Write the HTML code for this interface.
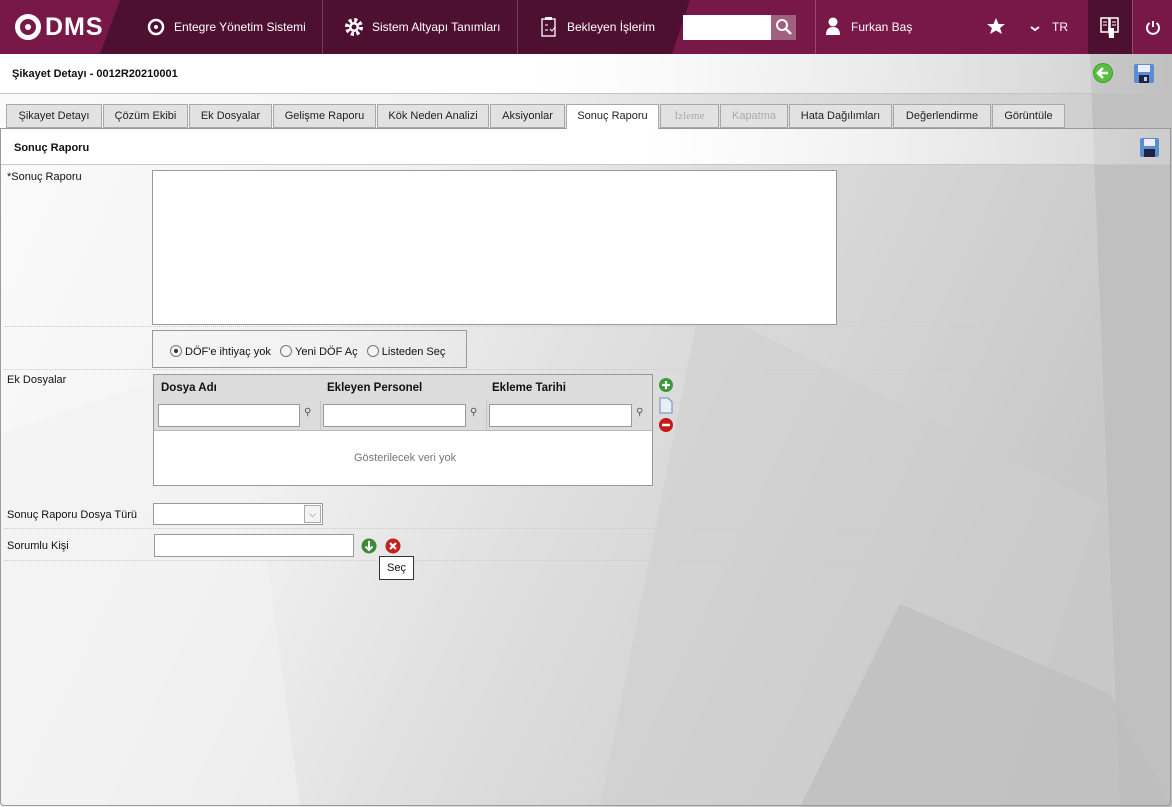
<!DOCTYPE html>
<html><head><meta charset="utf-8"><style>
*{margin:0;padding:0;box-sizing:border-box}
body{width:1172px;height:807px;overflow:hidden;font-family:"Liberation Sans",sans-serif;font-size:11px;color:#111;position:relative;background:#ddd}
.a{position:absolute}
.hdr{left:0;top:0;width:1172px;height:54px;background:#781848}
.nav{color:#fff;font-size:12px;top:0;height:54px;line-height:54px}
.tab{position:absolute;top:104px;height:24px;border:1px solid #a8a8a8;background:#e2e2e2;font-size:11px;line-height:22px;text-align:center;color:#222}
.tab.dis{color:#aaa}
.tab.act{background:#fff;height:25px;border-bottom:none}
.lbl{font-size:11px;color:#111}
.dot{height:0;border-top:1px dotted #ccc}
.inp{background:#fff;border:1px solid #999}
.rad{display:inline-block;width:12px;height:12px;border:1px solid #777;border-radius:50%;background:#f4f4f4;vertical-align:-2px;margin-right:3px;position:relative}
</style></head><body>
<svg class="a" style="left:0;top:54px" width="1172" height="753">
<defs><linearGradient id="g" x1="0" y1="0" x2="1" y2="0.3"><stop offset="0" stop-color="#fbfbfb"/><stop offset="0.35" stop-color="#f2f2f2"/><stop offset="0.6" stop-color="#dedede"/><stop offset="1" stop-color="#c8c8c8"/></linearGradient></defs>
<rect width="1172" height="753" fill="url(#g)"/>
<polygon points="0,380 240,300 300,753 0,753" fill="#f1f1f1" opacity=".6"/>
<polygon points="700,250 1100,450 1000,753 600,753" fill="#cdcdcd" opacity=".5"/>
<polygon points="1090,0 1172,0 1172,753 1120,753" fill="#c0c0c0"/>
<polygon points="900,550 1110,640 1172,753 800,753" fill="#bdbdbd" opacity=".7"/>
</svg>
<div class="a hdr"></div>
<svg class="a" style="left:0;top:0" width="1172" height="54">
<polygon points="120,0 690,0 672,54 100,54" fill="#4e1030"/>
<polygon points="1088,0 1132,0 1132,54 1088,54" fill="#4e1030"/>
<line x1="322.5" y1="0" x2="322.5" y2="54" stroke="#7a3a58"/>
<line x1="517.5" y1="0" x2="517.5" y2="54" stroke="#7a3a58"/>
<line x1="815.5" y1="0" x2="815.5" y2="54" stroke="#9a4a70"/>
<line x1="1132.5" y1="0" x2="1132.5" y2="54" stroke="#9a4a70"/>
<circle cx="28" cy="27" r="10.5" fill="none" stroke="#fff" stroke-width="5"/>
<circle cx="28" cy="27" r="3" fill="#fff"/>
<circle cx="156" cy="27" r="7" fill="none" stroke="#fff" stroke-width="2.5"/>
<circle cx="156" cy="27" r="2" fill="#fff"/>
<circle cx="354" cy="27" r="7" fill="none" stroke="#fff" stroke-width="4" stroke-dasharray="3 2.5"/>
<circle cx="354" cy="27" r="5" fill="#fff"/><circle cx="354" cy="27" r="2.5" fill="#4e1030"/>
<rect x="542" y="19" width="13" height="17" fill="none" stroke="#fff" stroke-width="1.3"/>
<path d="M545 17h7v3h-7z" fill="#fff"/><path d="M545 25h3M545 30h3M550 29l2 2 3-4" stroke="#fff" fill="none"/>
<rect x="683" y="15" width="88" height="25" fill="#fff"/>
<rect x="771" y="15" width="25" height="25" fill="#a06080"/>
<circle cx="782" cy="25" r="5" fill="none" stroke="#fff" stroke-width="2"/><path d="M786 29l5 5" stroke="#fff" stroke-width="2.5"/>
<circle cx="833" cy="22" r="4.5" fill="#fff"/><path d="M826 35q0-8 7-8t7 8z" fill="#fff"/>
<polygon points="996,18 998.5,24 1005,24 1000,28 1002,34 996,30.5 990,34 992,28 987,24 993.5,24" fill="#fff"/>
<path d="M1031 27l4 3 4-3" stroke="#fff" stroke-width="2" fill="none"/>
<path d="M1101 18h8v14h-8zM1110 18h8v14h-8z" fill="none" stroke="#fff" stroke-width="1.5"/>
<path d="M1103 22h4M1103 25h4M1112 22h4M1112 25h4" stroke="#fff"/>
<path d="M1108 28h6v10h-5z" fill="#fff"/>
<path d="M1153 21v6" stroke="#fff" stroke-width="2"/><path d="M1149.5 23a6 6 0 1 0 7 0" stroke="#fff" stroke-width="2" fill="none"/>
</svg>
<div class="a nav" style="left:45px;font-size:25px;font-weight:bold;letter-spacing:1px">DMS</div>
<div class="a nav" style="left:174px">Entegre Yönetim Sistemi</div>
<div class="a nav" style="left:372px">Sistem Altyapı Tanımları</div>
<div class="a nav" style="left:567px">Bekleyen İşlerim</div>
<div class="a nav" style="left:851px">Furkan Baş</div>
<div class="a nav" style="left:1052px">TR</div>

<div class="a" style="left:0;top:54px;width:1172px;height:40px;background:linear-gradient(90deg,#fff 0,#fff 45%,rgba(255,255,255,0) 100%);border-bottom:1px solid #c4c4c4"></div>
<div class="a" style="left:12px;top:68px;font-size:11px;font-weight:bold">Şikayet Detayı - 0012R20210001</div>
<svg class="a" style="left:1092px;top:62px" width="70" height="24">
<circle cx="11" cy="11" r="10" fill="#3aa028"/><circle cx="11" cy="11" r="9" fill="#58c040"/>
<path d="M16 11h-9M11 6l-5 5 5 5" stroke="#fff" stroke-width="2.5" fill="none"/>
<rect x="42" y="2" width="20" height="19" rx="2" fill="#5a8ed0"/><rect x="46" y="3" width="12" height="7" fill="#eef"/><rect x="47" y="13" width="10" height="8" fill="#224"/><rect x="52" y="15" width="3" height="4" fill="#ccd"/>
</svg>
<div class="a" style="left:0;top:128px;width:1171px;height:678px;border:1px solid #9a9a9a;border-radius:0 0 4px 4px"></div>
<div class="tab" style="left:6px;width:96px">Şikayet Detayı</div>
<div class="tab" style="left:103px;width:85px">Çözüm Ekibi</div>
<div class="tab" style="left:189px;width:83px">Ek Dosyalar</div>
<div class="tab" style="left:273px;width:103px">Gelişme Raporu</div>
<div class="tab" style="left:377px;width:112px">Kök Neden Analizi</div>
<div class="tab" style="left:490px;width:75px">Aksiyonlar</div>
<div class="tab act" style="left:566px;width:93px">Sonuç Raporu</div>
<div class="tab dis" style="left:660px;width:59px;font-family:'Liberation Serif',serif">İzleme</div>
<div class="tab dis" style="left:720px;width:68px">Kapatma</div>
<div class="tab" style="left:789px;width:103px">Hata Dağılımları</div>
<div class="tab" style="left:893px;width:98px">Değerlendirme</div>
<div class="tab" style="left:992px;width:73px">Görüntüle</div>
<div class="a" style="left:1px;top:129px;width:1169px;height:36px;background:linear-gradient(90deg,#fff 0,#fff 55%,rgba(255,255,255,.2) 100%);border-bottom:1px solid #c8c8c8"></div>
<div class="a" style="left:14px;top:142px;font-weight:bold;font-size:11px">Sonuç Raporu</div>
<svg class="a" style="left:1140px;top:138px" width="20" height="20"><rect x="0" y="0" width="19" height="19" rx="2" fill="#5a8ed0"/><rect x="4" y="1" width="11" height="7" fill="#eef"/><rect x="4" y="11" width="11" height="8" fill="#224"/></svg>
<div class="a lbl" style="left:7px;top:171px">*Sonuç Raporu</div>
<div class="a inp" style="left:152px;top:170px;width:685px;height:155px"></div>
<div class="a dot" style="left:4px;top:326px;width:1096px"></div>
<div class="a" style="left:152px;top:330px;width:315px;height:38px;border:1px solid #999"></div>
<div class="a lbl" style="left:170px;top:345px"><span class="rad"><span style="position:absolute;left:3px;top:3px;width:4px;height:4px;border-radius:50%;background:#333"></span></span>DÖF'e ihtiyaç yok&nbsp;&nbsp;&nbsp;<span class="rad"></span>Yeni DÖF Aç&nbsp;&nbsp;&nbsp;<span class="rad"></span>Listeden Seç</div>
<div class="a dot" style="left:4px;top:369px;width:1104px"></div>
<div class="a lbl" style="left:7px;top:374px">Ek Dosyalar</div>
<div class="a" style="left:153px;top:374px;width:500px;height:112px;border:1px solid #999;background:#fff"></div>
<div class="a" style="left:154px;top:375px;width:498px;height:56px;background:#dcdcdc;border-bottom:1px solid #bbb"></div>
<div class="a" style="left:161px;top:382px;font-weight:bold;font-size:11.5px">Dosya Adı</div>
<div class="a" style="left:327px;top:382px;font-weight:bold;font-size:11.5px">Ekleyen Personel</div>
<div class="a" style="left:492px;top:382px;font-weight:bold;font-size:11.5px">Ekleme Tarihi</div>
<div class="a" style="left:320px;top:401px;width:1px;height:30px;background:#c4c4c4"></div>
<div class="a" style="left:486px;top:401px;width:1px;height:30px;background:#c4c4c4"></div>
<div class="a inp" style="left:158px;top:404px;width:142px;height:23px"></div>
<div class="a inp" style="left:323px;top:404px;width:143px;height:23px"></div>
<div class="a inp" style="left:489px;top:404px;width:143px;height:23px"></div>
<div class="a" style="left:304px;top:407px;font-size:10px;color:#555">⚲</div>
<div class="a" style="left:470px;top:407px;font-size:10px;color:#555">⚲</div>
<div class="a" style="left:636px;top:407px;font-size:10px;color:#555">⚲</div>
<div class="a" style="left:354px;top:452px;color:#777;font-size:11px">Gösterilecek veri yok</div>
<svg class="a" style="left:658px;top:377px" width="18" height="56">
<circle cx="8" cy="8" r="7" fill="#3a9a3a"/><path d="M8 4v8M4 8h8" stroke="#fff" stroke-width="2.2"/>
<path d="M2 21h8l4 4v11h-12z" fill="#e8eef8" stroke="#6a8ac0"/>
<circle cx="8" cy="48" r="7" fill="#c81818"/><path d="M4 48h8" stroke="#fff" stroke-width="2.5"/>
</svg>
<div class="a lbl" style="left:7px;top:509px">Sonuç Raporu Dosya Türü</div>
<div class="a inp" style="left:153px;top:503px;width:170px;height:22px"></div>
<div class="a" style="left:304px;top:505px;width:17px;height:18px;border:1px solid #aaa;background:#f4f4f4;text-align:center;font-size:9px;line-height:16px;color:#555">⌵</div>
<div class="a dot" style="left:4px;top:528px;width:1096px"></div>
<div class="a lbl" style="left:7px;top:540px">Sorumlu Kişi</div>
<div class="a inp" style="left:154px;top:534px;width:200px;height:23px"></div>
<svg class="a" style="left:360px;top:537px" width="42" height="18">
<circle cx="9" cy="9" r="7.5" fill="#3a8a3a"/><path d="M9 4v9M5.5 9.5l3.5 3.5 3.5-3.5" stroke="#fff" stroke-width="2" fill="none"/>
<circle cx="33" cy="9" r="7.5" fill="#c42020"/><path d="M30 6l6 6M36 6l-6 6" stroke="#fff" stroke-width="2.2"/>
</svg>
<div class="a dot" style="left:4px;top:560px;width:1096px"></div>
<div class="a" style="left:379px;top:556px;width:35px;height:24px;background:#fff;border:1px solid #333;font-size:11px;line-height:22px;text-align:center">Seç</div>
</body></html>
